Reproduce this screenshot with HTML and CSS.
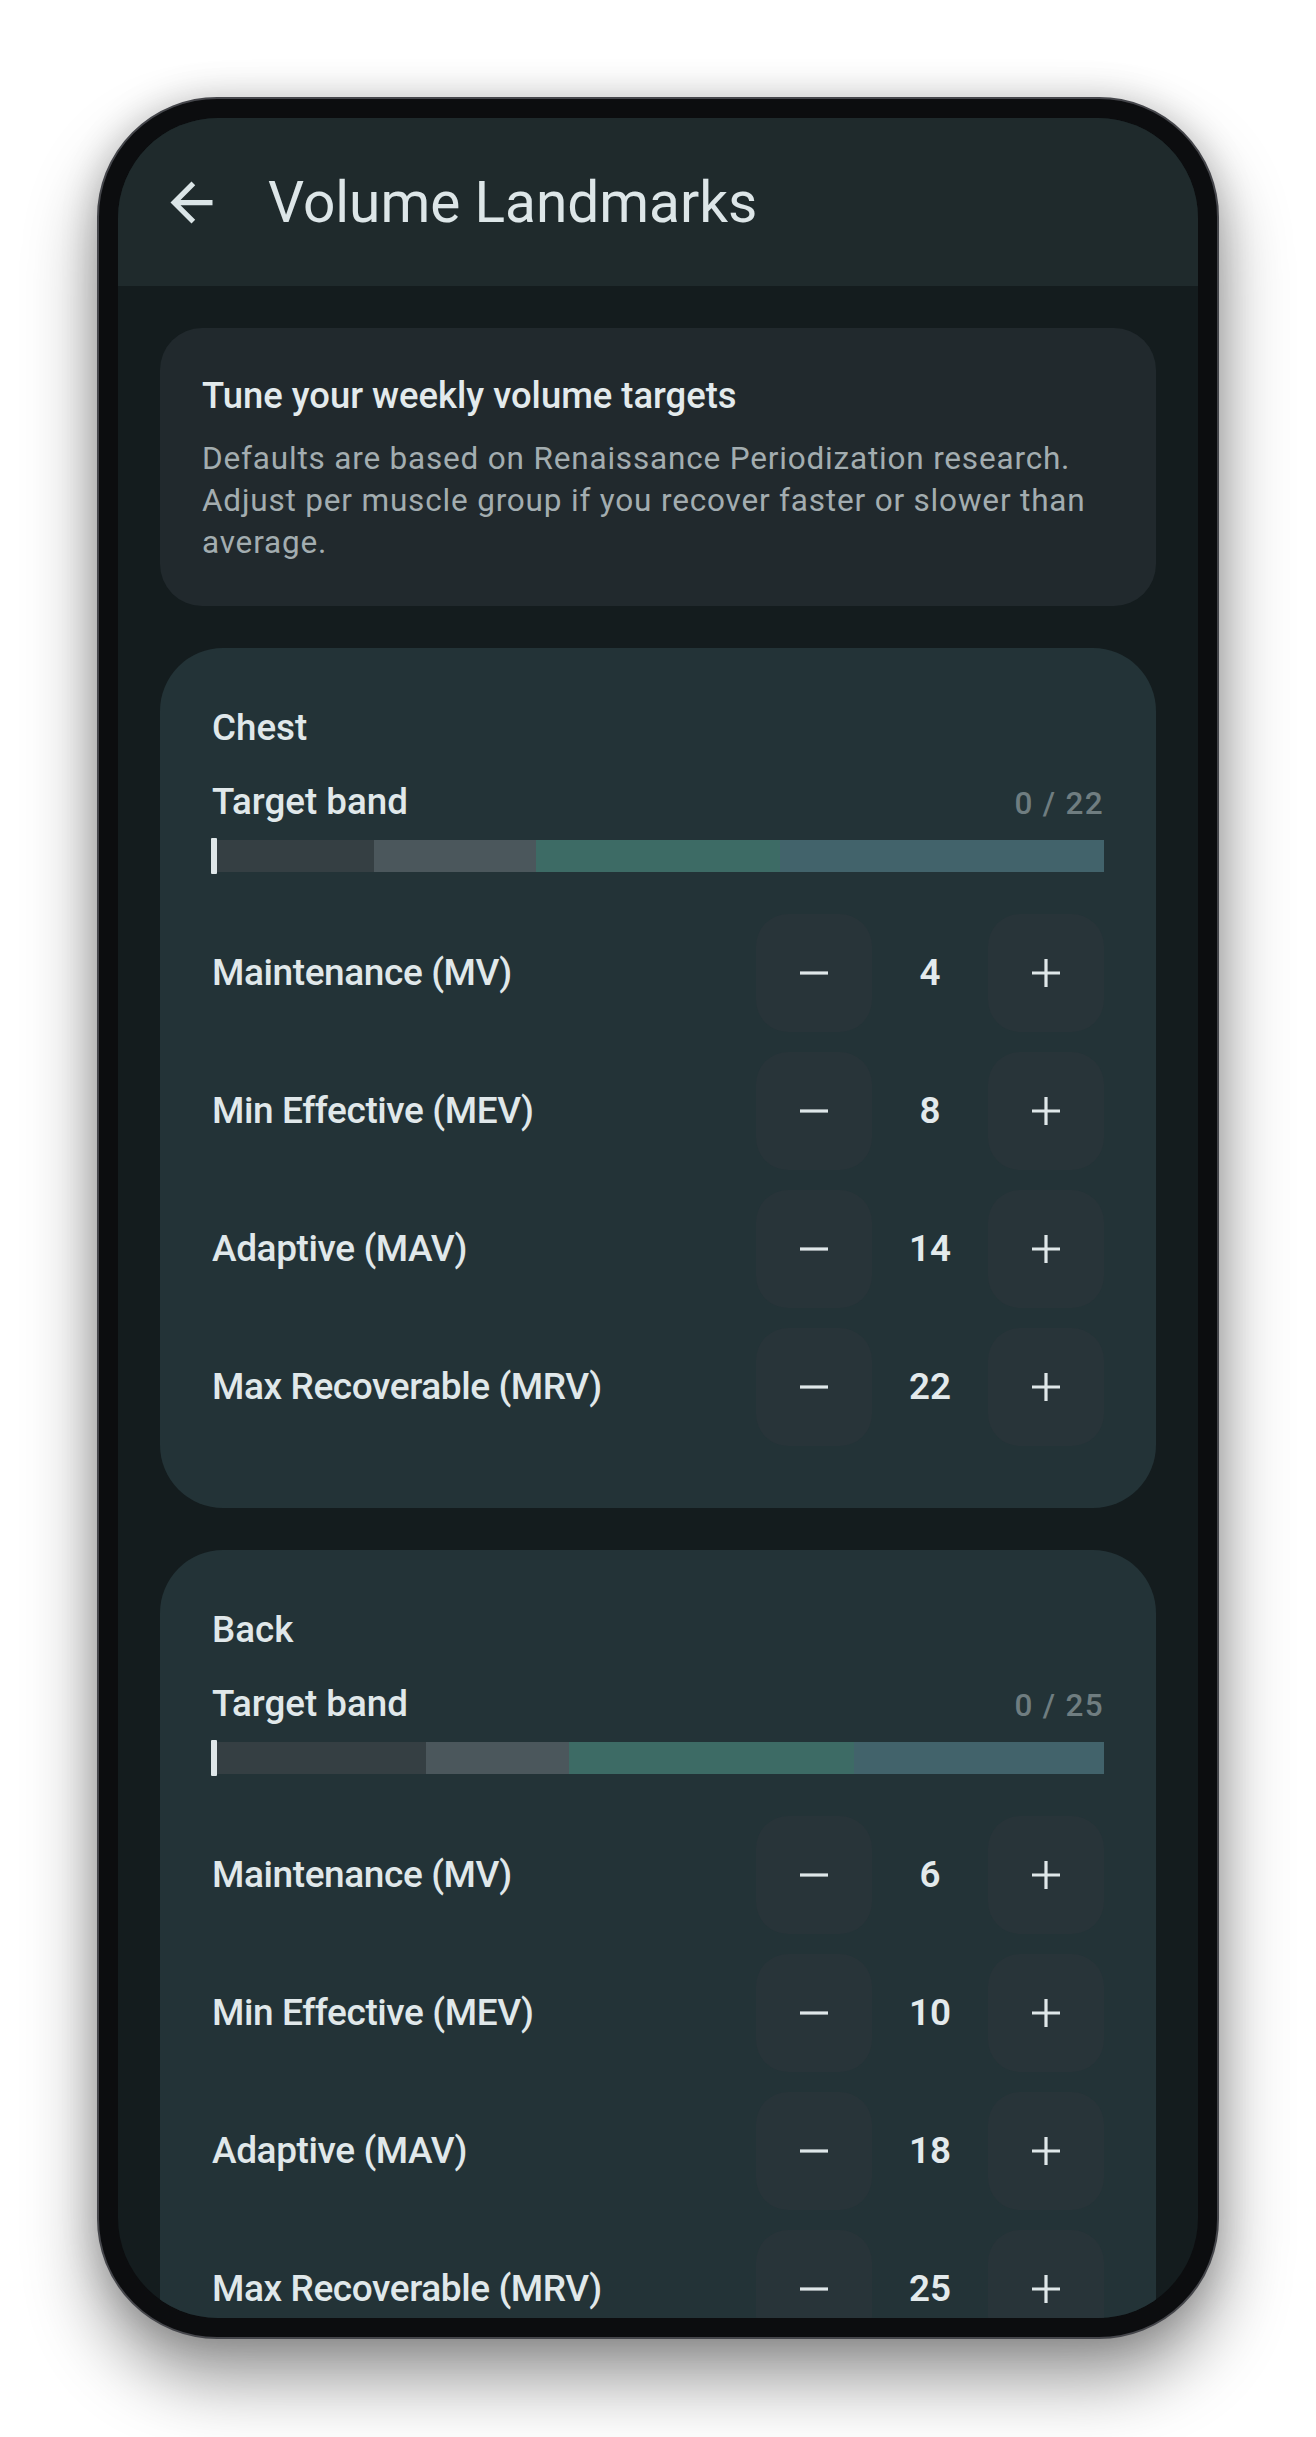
FILE: index.html
```html
<!DOCTYPE html>
<html lang="en">
<head>
  <meta charset="UTF-8" />
  <title>Volume Landmarks</title>
  <link rel="stylesheet" href="styles.css">
</head>
<body>

<div class="phone">
  <div class="screen">

    <header class="topbar">
      <svg class="back-icon" viewBox="0 0 24 24" width="63" height="63">
        <path d="M20 11H7.83l5.59-5.59L12 4l-8 8 8 8 1.41-1.41L7.83 13H20v-2z" fill="#dbe5e7"/>
      </svg>
      <h1 class="title">Volume Landmarks</h1>
    </header>

    <main class="content">

      <section class="intro">
        <h2 class="intro-title">Tune your weekly volume targets</h2>
        <p class="intro-text">Defaults are based on Renaissance Periodization research. Adjust per muscle group if you recover faster or slower than average.</p>
      </section>

      <section class="muscle">
        <h3 class="muscle-name">Chest</h3>
        <div class="band-head">
          <span class="band-label">Target band</span>
          <span class="band-count">0 / 22</span>
        </div>
        <div class="band">
          <div class="seg seg-mv" style="width: 18.18%"></div>
          <div class="seg seg-mev" style="width: 18.18%"></div>
          <div class="seg seg-mav" style="width: 27.27%"></div>
          <div class="seg seg-mrv" style="width: 36.37%"></div>
          <div class="marker" style="left: 0%"></div>
        </div>

        <div class="row">
          <span class="row-label">Maintenance (MV)</span>
          <div class="stepper">
            <button class="step-btn"><svg viewBox="0 0 28 28" width="28" height="28"><path d="M0 14H28"/></svg></button>
            <span class="value">4</span>
            <button class="step-btn"><svg viewBox="0 0 28 28" width="28" height="28"><path d="M0 14H28M14 0V28"/></svg></button>
          </div>
        </div>
        <div class="row">
          <span class="row-label">Min Effective (MEV)</span>
          <div class="stepper">
            <button class="step-btn"><svg viewBox="0 0 28 28" width="28" height="28"><path d="M0 14H28"/></svg></button>
            <span class="value">8</span>
            <button class="step-btn"><svg viewBox="0 0 28 28" width="28" height="28"><path d="M0 14H28M14 0V28"/></svg></button>
          </div>
        </div>
        <div class="row">
          <span class="row-label">Adaptive (MAV)</span>
          <div class="stepper">
            <button class="step-btn"><svg viewBox="0 0 28 28" width="28" height="28"><path d="M0 14H28"/></svg></button>
            <span class="value">14</span>
            <button class="step-btn"><svg viewBox="0 0 28 28" width="28" height="28"><path d="M0 14H28M14 0V28"/></svg></button>
          </div>
        </div>
        <div class="row">
          <span class="row-label">Max Recoverable (MRV)</span>
          <div class="stepper">
            <button class="step-btn"><svg viewBox="0 0 28 28" width="28" height="28"><path d="M0 14H28"/></svg></button>
            <span class="value">22</span>
            <button class="step-btn"><svg viewBox="0 0 28 28" width="28" height="28"><path d="M0 14H28M14 0V28"/></svg></button>
          </div>
        </div>
      </section>

      <section class="muscle">
        <h3 class="muscle-name">Back</h3>
        <div class="band-head">
          <span class="band-label">Target band</span>
          <span class="band-count">0 / 25</span>
        </div>
        <div class="band">
          <div class="seg seg-mv" style="width: 24%"></div>
          <div class="seg seg-mev" style="width: 16%"></div>
          <div class="seg seg-mav" style="width: 32%"></div>
          <div class="seg seg-mrv" style="width: 28%"></div>
          <div class="marker" style="left: 0%"></div>
        </div>

        <div class="row">
          <span class="row-label">Maintenance (MV)</span>
          <div class="stepper">
            <button class="step-btn"><svg viewBox="0 0 28 28" width="28" height="28"><path d="M0 14H28"/></svg></button>
            <span class="value">6</span>
            <button class="step-btn"><svg viewBox="0 0 28 28" width="28" height="28"><path d="M0 14H28M14 0V28"/></svg></button>
          </div>
        </div>
        <div class="row">
          <span class="row-label">Min Effective (MEV)</span>
          <div class="stepper">
            <button class="step-btn"><svg viewBox="0 0 28 28" width="28" height="28"><path d="M0 14H28"/></svg></button>
            <span class="value">10</span>
            <button class="step-btn"><svg viewBox="0 0 28 28" width="28" height="28"><path d="M0 14H28M14 0V28"/></svg></button>
          </div>
        </div>
        <div class="row">
          <span class="row-label">Adaptive (MAV)</span>
          <div class="stepper">
            <button class="step-btn"><svg viewBox="0 0 28 28" width="28" height="28"><path d="M0 14H28"/></svg></button>
            <span class="value">18</span>
            <button class="step-btn"><svg viewBox="0 0 28 28" width="28" height="28"><path d="M0 14H28M14 0V28"/></svg></button>
          </div>
        </div>
        <div class="row">
          <span class="row-label">Max Recoverable (MRV)</span>
          <div class="stepper">
            <button class="step-btn"><svg viewBox="0 0 28 28" width="28" height="28"><path d="M0 14H28"/></svg></button>
            <span class="value">25</span>
            <button class="step-btn"><svg viewBox="0 0 28 28" width="28" height="28"><path d="M0 14H28M14 0V28"/></svg></button>
          </div>
        </div>
      </section>

    </main>
  </div>
</div>

</body>
</html>
```

FILE: styles.css
```css
html {
  background: #ffffff;
}
body {
  margin: 0;
  padding: 97px 0 120px;
  min-height: 2437px;
  box-sizing: border-box;
  font-family: Roboto, "Noto Sans", sans-serif;
}
.phone {
  box-sizing: border-box;
  width: 1122px;
  height: 2242px;
  margin: 0 auto;
  padding: 19px;
  background: #0c0d0f;
  border: 2px solid #45464b;
  border-radius: 120px;
  box-shadow: 0 40px 70px rgba(0, 0, 0, 0.42), 0 0 36px rgba(0, 0, 0, 0.18);
}
.screen {
  width: 1080px;
  height: 2200px;
  overflow: hidden;
  border-radius: 100px;
  background: #141c1e;
}
.topbar {
  display: flex;
  align-items: center;
  height: 168px;
  background: #1f2a2c;
}
.back-icon {
  margin-left: 42px;
}
.title {
  margin: 0 0 0 45px;
  font-size: 56.8px;
  font-weight: 400;
  color: #dde6e8;
}
.content {
  padding: 42px;
  display: flex;
  flex-direction: column;
  gap: 42px;
}
.intro {
  padding: 42px;
  background: #21292d;
  border-radius: 42px;
}
.intro-title {
  margin: 0;
  font-size: 36.4px;
  line-height: 52.5px;
  font-weight: 500;
  color: #e3eaec;
}
.intro-text {
  margin: 15px 0 0;
  font-size: 31.5px;
  line-height: 42px;
  letter-spacing: 0.82px;
  color: #a3adb0;
}
.muscle {
  padding: 54px 52px 52px;
  background: #233337;
  border-radius: 63px;
}
.muscle-name {
  margin: 0;
  font-size: 36.75px;
  line-height: 52.5px;
  font-weight: 500;
  color: #e0e8ea;
}
.band-head {
  display: flex;
  justify-content: space-between;
  align-items: baseline;
  margin-top: 22px;
}
.band-label {
  font-size: 36.75px;
  line-height: 52.5px;
  font-weight: 500;
  color: #e0e8ea;
}
.band-count {
  font-size: 31.5px;
  font-weight: 500;
  letter-spacing: 1.3px;
  color: #6f7d80;
}
.band {
  position: relative;
  display: flex;
  height: 32px;
  margin: 11px 0 32px;
}
.seg-mv { background: #353f43; }
.seg-mev { background: #4b575c; }
.seg-mav { background: #3d6b65; }
.seg-mrv { background: #42636b; }
.marker {
  position: absolute;
  top: -2px;
  bottom: -2px;
  width: 6px;
  margin-left: -1px;
  background: #dfe7e9;
  border-radius: 1px;
}
.row {
  display: flex;
  align-items: center;
  justify-content: space-between;
  padding: 10px 0;
}
.row-label {
  font-size: 37px;
  font-weight: 500;
  letter-spacing: -0.4px;
  color: #e0e8ea;
}
.stepper {
  display: flex;
  align-items: center;
}
.step-btn {
  display: flex;
  align-items: center;
  justify-content: center;
  width: 116px;
  height: 118px;
  padding: 0;
  border: none;
  border-radius: 32px;
  background: #283439;
}
.step-btn svg {
  stroke: #dfe7e9;
  stroke-width: 3.2;
  fill: none;
}
.value {
  width: 116px;
  text-align: center;
  font-size: 36.75px;
  font-weight: 600;
  color: #e3eaec;
}
```
